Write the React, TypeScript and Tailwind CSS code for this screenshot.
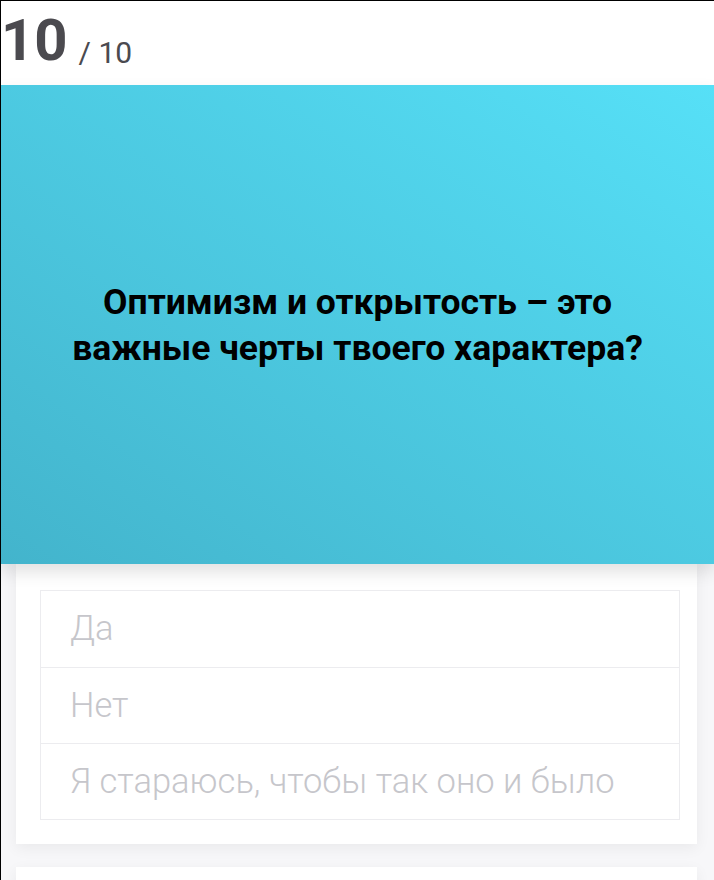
import React from 'react';

const options = ['Да', 'Нет', 'Я стараюсь, чтобы так оно и было'];

export default function App() {
  return (
    <div
      className="w-[714px] h-[880px] overflow-hidden border-t border-l border-black bg-[#f7f7f9]"
      style={{ fontFamily: 'Roboto, "Noto Sans", sans-serif' }}
    >
      {/* Header */}
      <div className="h-[84px] bg-white flex items-end pb-[16px]">
        <span className="text-[58px] leading-none font-bold text-[#4b4a4f]">10</span>
        <span className="text-[30px] leading-none text-[#4b4a4f] ml-[11px] mb-[1px]">/ 10</span>
      </div>

      {/* Question */}
      <div className="relative z-10 h-[479px] bg-gradient-to-tr from-[#43b4cc] to-[#56e0f7] flex items-center justify-center shadow-[0_8px_16px_rgba(0,0,0,0.12)]">
        <h2 className="text-[35.5px] leading-[46px] font-bold text-black text-center">
          Оптимизм и открытость – это
          <br />
          важные черты твоего характера?
        </h2>
      </div>

      {/* Answers card */}
      <div className="ml-[15px] mr-[17px] bg-white pt-[26px] pb-6 pl-6 pr-[17px] shadow-[0_4px_14px_rgba(0,0,0,0.06)]">
        <div className="border border-[#ececef]">
          {options.map((o, i) => (
            <div
              key={o}
              className={`h-[76px] flex items-center pl-[29px] text-[34.5px] font-light text-[#c6c6cb] ${i > 0 ? 'border-t border-[#ececef]' : ''}`}
            >
              {o}
            </div>
          ))}
        </div>
      </div>

      {/* Next card */}
      <div className="ml-[15px] mr-[17px] mt-[23px] h-[60px] bg-white shadow-[0_4px_14px_rgba(0,0,0,0.06)]" />
    </div>
  );
}
